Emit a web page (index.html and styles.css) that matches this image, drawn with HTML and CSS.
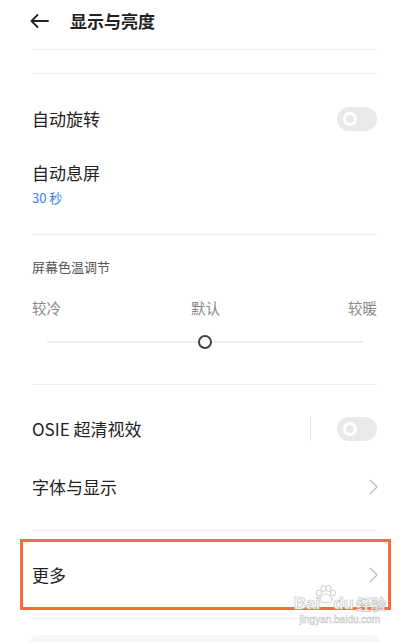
FILE: index.html
```html
<!DOCTYPE html>
<html>
  <head>
    <title>显示与亮度</title>
    <meta charset="utf-8"/>
    <meta name="viewport" content="width=device-width, initial-scale=1"/>
    <link rel="stylesheet" href="styles.css">
  </head>
  <body>
    <div id="header">
      <svg class="back" width="19" height="14" viewBox="0 0 19 14">
        <path d="M18 7H1.5M7.5 1L1.5 7l6 6" fill="none" stroke="#222" stroke-width="1.8" stroke-linecap="round" stroke-linejoin="round"/>
      </svg>
      <div class="title">显示与亮度</div>
    </div>

    <div id="list">
      <div class="rule first"></div>
      <div class="rule blank"></div>

      <div class="row switch-row">
        <div class="label">自动旋转</div>
        <div class="switch"></div>
      </div>

      <div class="sub-row">
        <div class="label">自动息屏</div>
        <div class="value">30 秒</div>
      </div>

      <div class="rule"></div>

      <div class="caption">屏幕色温调节</div>
      <div class="temp-labels">
        <span>较冷</span>
        <span>默认</span>
        <span>较暖</span>
      </div>
      <div class="slider">
        <div class="track"></div>
        <div class="knob"></div>
      </div>

      <div class="rule slider-rule"></div>

      <div class="row osie-row">
        <div class="label">OSIE 超清视效</div>
        <div class="sep"></div>
        <div class="switch"></div>
      </div>

      <div class="row font-row">
        <div class="label">字体与显示</div>
        <svg class="chev" width="9" height="16" viewBox="0 0 9 16">
          <path d="M1 1l7 7-7 7" fill="none" stroke="#bbb" stroke-width="1.4"/>
        </svg>
      </div>

      <div class="rule font-rule"></div>

      <div class="row more-row">
        <div class="label">更多</div>
        <svg class="chev" width="9" height="16" viewBox="0 0 9 16">
          <path d="M1 1l7 7-7 7" fill="none" stroke="#bbb" stroke-width="1.4"/>
        </svg>
        <!-- baidu jingyan watermark -->
        <div class="watermark">
          <div class="wm-top">
            <span>Bai</span>
            <svg class="paw" width="22" height="18" viewBox="0 0 22 18">
              <g fill="#fff" stroke="#cfcfcf" stroke-width="1">
                <ellipse cx="4" cy="8" rx="2.6" ry="3"/>
                <ellipse cx="8.5" cy="3.5" rx="2.6" ry="3"/>
                <ellipse cx="13.5" cy="3.5" rx="2.6" ry="3"/>
                <ellipse cx="18" cy="8" rx="2.6" ry="3"/>
                <path d="M11 9c3 0 6 3.5 6 6s-2 2.5-6 2.5-6 0-6-2.5 3-6 6-6z"/>
              </g>
            </svg>
            <span>du</span>
            <span class="wm-cn">经验</span>
          </div>
          <div class="wm-url">jingyan.baidu.com</div>
        </div>
      </div>

      <div class="rule"></div>

      <div class="card"></div>
    </div>
  </body>
</html>
```

FILE: styles.css
```css
html {height: 100%;}
body {
  margin: 0;
  padding: 0;
  background: #fff;
  color: #222;
  font-family: "Noto Sans CJK SC", "Noto Sans", sans-serif;
  overflow: hidden;
}

#header {
  height: 42px;
  display: flex;
  align-items: center;
  padding-left: 30px;
}
#header .back {
  display: block;
}
#header .title {
  margin-left: 21px;
  font-size: 17px;
  font-weight: 700;
  line-height: 24px;
  color: #222;
}

#list {
  padding: 0 36px 0 32px;
}

.rule {
  height: 1px;
  background: #eeeeee;
}
.rule.first { margin-top: 7px; }
.rule.blank { margin-top: 23px; }

.row {
  display: flex;
  align-items: center;
  height: 50px;
}
.row .label {
  flex: 1;
  font-size: 17px;
  line-height: 24px;
}

.switch-row { margin-top: 20px; }

.switch {
  width: 40px;
  height: 24px;
  border-radius: 12px;
  background: #e9e9e9;
  position: relative;
}
.switch::before {
  content: "";
  position: absolute;
  left: 6px;
  top: 5px;
  width: 8px;
  height: 8px;
  border: 3px solid #fff;
  border-radius: 50%;
}

.sub-row {
  padding: 17px 0 27px;
}
.sub-row .label {
  font-size: 17px;
  line-height: 24px;
}
.sub-row .value {
  margin-top: 4px;
  font-size: 13px;
  line-height: 18px;
  color: #3d7fe0;
}

.caption {
  margin-top: 22px;
  font-size: 13px;
  line-height: 20px;
  color: #555;
}

.temp-labels {
  margin-top: 21px;
  display: flex;
  justify-content: space-between;
  font-size: 14.5px;
  line-height: 20px;
  color: #888;
}
.temp-labels span:nth-child(2) {
  margin-left: 2px;
}

.slider {
  margin-top: 14px;
  height: 20px;
  padding: 0 14px 0 15px;
  display: flex;
  align-items: center;
  position: relative;
}
.slider .track {
  flex: 1;
  height: 2px;
  background: #eeeeee;
}
.slider .knob {
  position: absolute;
  left: 166px;
  top: 3px;
  width: 10px;
  height: 10px;
  border: 2.5px solid #444;
  border-radius: 50%;
  background: #fff;
}

.slider-rule { margin-top: 32px; }

.osie-row { margin-top: 19px; }
.osie-row .sep {
  width: 1px;
  height: 24px;
  background: #e2e2e2;
  margin-right: 26px;
}

.font-row { height: 66px; }

.chev {
  display: block;
  margin-right: -1px;
}

.font-rule { margin-top: 10px; }

.more-row {
  height: 87px;
  position: relative;
}
.more-row::after {
  content: "";
  position: absolute;
  left: -12px;
  right: -14px;
  top: 8px;
  bottom: 8px;
  border: 3px solid #f36d3c;
}

.watermark {
  position: absolute;
  right: -9px;
  top: 57px;
  white-space: nowrap;
  text-align: center;
  color: #fff;
  font-family: "Liberation Sans", sans-serif;
  -webkit-text-stroke: 0.7px #c4c4c4;
  z-index: 2;
}
.watermark .wm-top {
  display: flex;
  align-items: flex-end;
  justify-content: center;
  height: 24px;
  font-size: 17px;
  font-weight: 700;
  line-height: 17px;
}
.watermark .paw {
  display: block;
  flex: none;
  margin: 0 -4px 9px -5px;
}
.watermark .wm-cn {
  margin-left: 2px;
  font-family: "Noto Sans CJK SC", sans-serif;
  font-size: 15px;
}
.watermark .wm-url {
  margin-top: 2px;
  font-size: 10px;
  line-height: 12px;
  -webkit-text-stroke: 0.5px #c4c4c4;
}

.card {
  margin: 16px -3px 0 -2px;
  height: 7px;
  border-radius: 14px 14px 0 0;
  background: #f6f6f6;
}
```
